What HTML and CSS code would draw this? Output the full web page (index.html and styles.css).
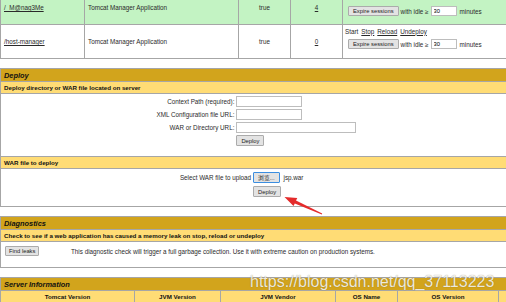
FILE: index.html
```html
<!DOCTYPE html>
<html lang="en">

<head>
    <meta charset="UTF-8">
    <title>/manager</title>
    <link rel="stylesheet" href="styles.css">
</head>

<body>
    <div class="page">
        <table class="apps">
            <colgroup>
                <col class="c-path">
                <col class="c-name">
                <col class="c-run">
                <col class="c-sess">
                <col>
            </colgroup>
            <tr class="green">
                <td><a href="#">/_M@nag3Me</a></td>
                <td>Tomcat Manager Application</td>
                <td class="center">true</td>
                <td class="center"><a href="#">4</a></td>
                <td class="cmds cmds-top">
                    <div class="expire">
                        <button type="button" class="btn">Expire sessions</button>
                        <span>with idle &ge;</span>
                        <input class="idle" type="text" value="30">
                        <span>minutes</span>
                    </div>
                </td>
            </tr>
            <tr>
                <td><a href="#">/host-manager</a></td>
                <td>Tomcat Manager Application</td>
                <td class="center">true</td>
                <td class="center"><a href="#">0</a></td>
                <td class="cmds">
                    <div class="links"><span>Start</span><a href="#">Stop</a><a href="#">Reload</a><a href="#">Undeploy</a></div>
                    <div class="expire">
                        <button type="button" class="btn">Expire sessions</button>
                        <span>with idle &ge;</span>
                        <input class="idle" type="text" value="30">
                        <span>minutes</span>
                    </div>
                </td>
            </tr>
        </table>

        <table class="section">
            <tr class="title"><td>Deploy</td></tr>
            <tr class="sub"><td>Deploy directory or WAR file located on server</td></tr>
            <tr>
                <td class="body body-dir">
                    <div class="form">
                        <label>Context Path (required):</label><input class="field" type="text">
                        <label>XML Configuration file URL:</label><input class="field" type="text">
                        <label>WAR or Directory URL:</label><input class="field wide" type="text">
                        <span></span><div><button type="button" class="btn">Deploy</button></div>
                    </div>
                </td>
            </tr>
            <tr class="sub"><td>WAR file to deploy</td></tr>
            <tr>
                <td class="body body-war">
                    <div class="form">
                        <label>Select WAR file to upload</label>
                        <div class="file"><button type="button" class="btn focus">浏览...</button><span>jsp.war</span></div>
                        <span></span><div><button type="button" class="btn">Deploy</button></div>
                    </div>
                </td>
            </tr>
        </table>

        <table class="section">
            <tr class="title"><td>Diagnostics</td></tr>
            <tr class="sub"><td>Check to see if a web application has caused a memory leak on stop, reload or undeploy</td></tr>
            <tr>
                <td class="body body-diag">
                    <div class="diag">
                        <div class="diag-btn"><button type="button" class="btn">Find leaks</button></div>
                        <span>This diagnostic check will trigger a full garbage collection. Use it with extreme caution on production systems.</span>
                    </div>
                </td>
            </tr>
        </table>

        <table class="section server">
            <colgroup>
                <col class="s-tomcat">
                <col class="s-jvm">
                <col class="s-vendor">
                <col class="s-os">
                <col class="s-osver">
                <col>
            </colgroup>
            <tr class="title"><td colspan="6">Server Information</td></tr>
            <tr class="sub heads">
                <td>Tomcat Version</td>
                <td>JVM Version</td>
                <td>JVM Vendor</td>
                <td>OS Name</td>
                <td>OS Version</td>
                <td></td>
            </tr>
        </table>
    </div>

    <div class="watermark">https://blog.csdn.net/qq_37113223</div>

    <svg class="arrow" width="506" height="302" viewBox="0 0 506 302">
        <polygon points="284.5,197 297.3,197.9 296,200.6 322.2,213.6 321.8,214.4 294.8,203.4 293.5,206.1" fill="#e42b2b"/>
    </svg>
</body>

</html>
```

FILE: styles.css
```css
* {
    box-sizing: border-box;
}

html,
body {
    margin: 0;
    overflow: hidden;
}

body {
    font-family: "Liberation Sans", Arial, sans-serif;
    font-size: 6.3px;
    color: #2a2a2a;
    background: #fff;
}

a {
    color: #2a2a2a;
}

.page {
    width: 513px;
}

table {
    width: 100%;
    border-collapse: collapse;
    table-layout: fixed;
}

td {
    border: 1px solid #a6a6a6;
    padding: 0 3px;
}

/* applications list */
.apps {
    margin-top: -10px;
}

.apps td {
    height: 34px;
    vertical-align: middle;
}

.c-path {
    width: 84px;
}

.c-name {
    width: 154px;
}

.c-run,
.c-sess {
    width: 52px;
}

.green td {
    background: #c3f3c3;
}

.center {
    text-align: center;
}

.apps .cmds {
    vertical-align: top;
    padding: 1px 2px 0;
}

/* first row starts above the window, only its button line shows */
.apps .cmds-top {
    padding-top: 15px;
}

.cmds-top .expire {
    margin-top: 0;
}

.links {
    display: flex;
    align-items: center;
    gap: 3px;
    height: 10px;
}

.expire {
    display: flex;
    align-items: center;
    gap: 2px;
    margin-top: 3px;
    padding-left: 3px;
}

.idle {
    width: 26px;
    height: 10px;
    margin-right: 1px;
}

input {
    border: 1px solid #bdbdbd;
    background: #fff;
    font-family: inherit;
    font-size: 5.8px;
    padding: 0 2px;
    margin: 0;
}

.btn {
    height: 10px;
    margin: 0;
    padding: 0 4px;
    border: 1px solid #ababab;
    border-radius: 1px;
    background: #e3e3e3;
    color: #222;
    font-family: "Liberation Sans", "Noto Sans CJK SC", sans-serif;
    font-size: 5.8px;
    line-height: 8px;
}

.btn.focus {
    border-color: #3b8ee0;
}

/* sections */
.section {
    margin-top: 9px;
}

.title td {
    height: 13px;
    background: #d2a41c;
    color: #111;
    font-size: 7.4px;
    font-weight: bold;
    font-style: italic;
}

.sub td {
    height: 12px;
    background: #ffdc75;
    color: #111;
    font-size: 6.2px;
    font-weight: bold;
}

.body {
    vertical-align: top;
}

.form {
    display: grid;
    grid-template-columns: auto auto;
    justify-content: center;
    align-items: center;
    column-gap: 2px;
}

.form label {
    text-align: right;
}

.field {
    width: 66px;
    height: 11px;
}

.field.wide {
    width: 120px;
}

.form .btn {
    height: 11px;
}

.body-dir {
    height: 63px;
    padding-top: 2px;
}

.body-dir .form {
    row-gap: 2px;
}

.body-war {
    height: 38px;
    padding-top: 3px;
}

.body-war .form {
    row-gap: 3px;
}

.file {
    display: flex;
    align-items: center;
    gap: 4px;
    width: 80px;
}

.body-diag {
    height: 26px;
    padding: 4px 3px 0 4px;
}

.diag {
    display: grid;
    grid-template-columns: 66px 1fr;
    align-items: center;
}

.diag .btn {
    padding: 0 3px;
}

.server {
    width: 600px;
}

.s-tomcat {
    width: 134px;
}

.s-jvm {
    width: 86px;
}

.s-vendor {
    width: 115px;
}

.s-os {
    width: 62px;
}

.s-osver {
    width: 101px;
}

.heads td {
    text-align: center;
}

/* overlays */
.watermark {
    position: absolute;
    left: 250px;
    top: 273px;
    font-family: "Liberation Sans", Arial, sans-serif;
    font-size: 16px;
    color: rgba(255, 255, 255, 0.85);
    text-shadow: 0 0 1px rgba(90, 70, 20, 0.6);
    white-space: nowrap;
}

.arrow {
    position: absolute;
    left: 0;
    top: 0;
    pointer-events: none;
}
```
